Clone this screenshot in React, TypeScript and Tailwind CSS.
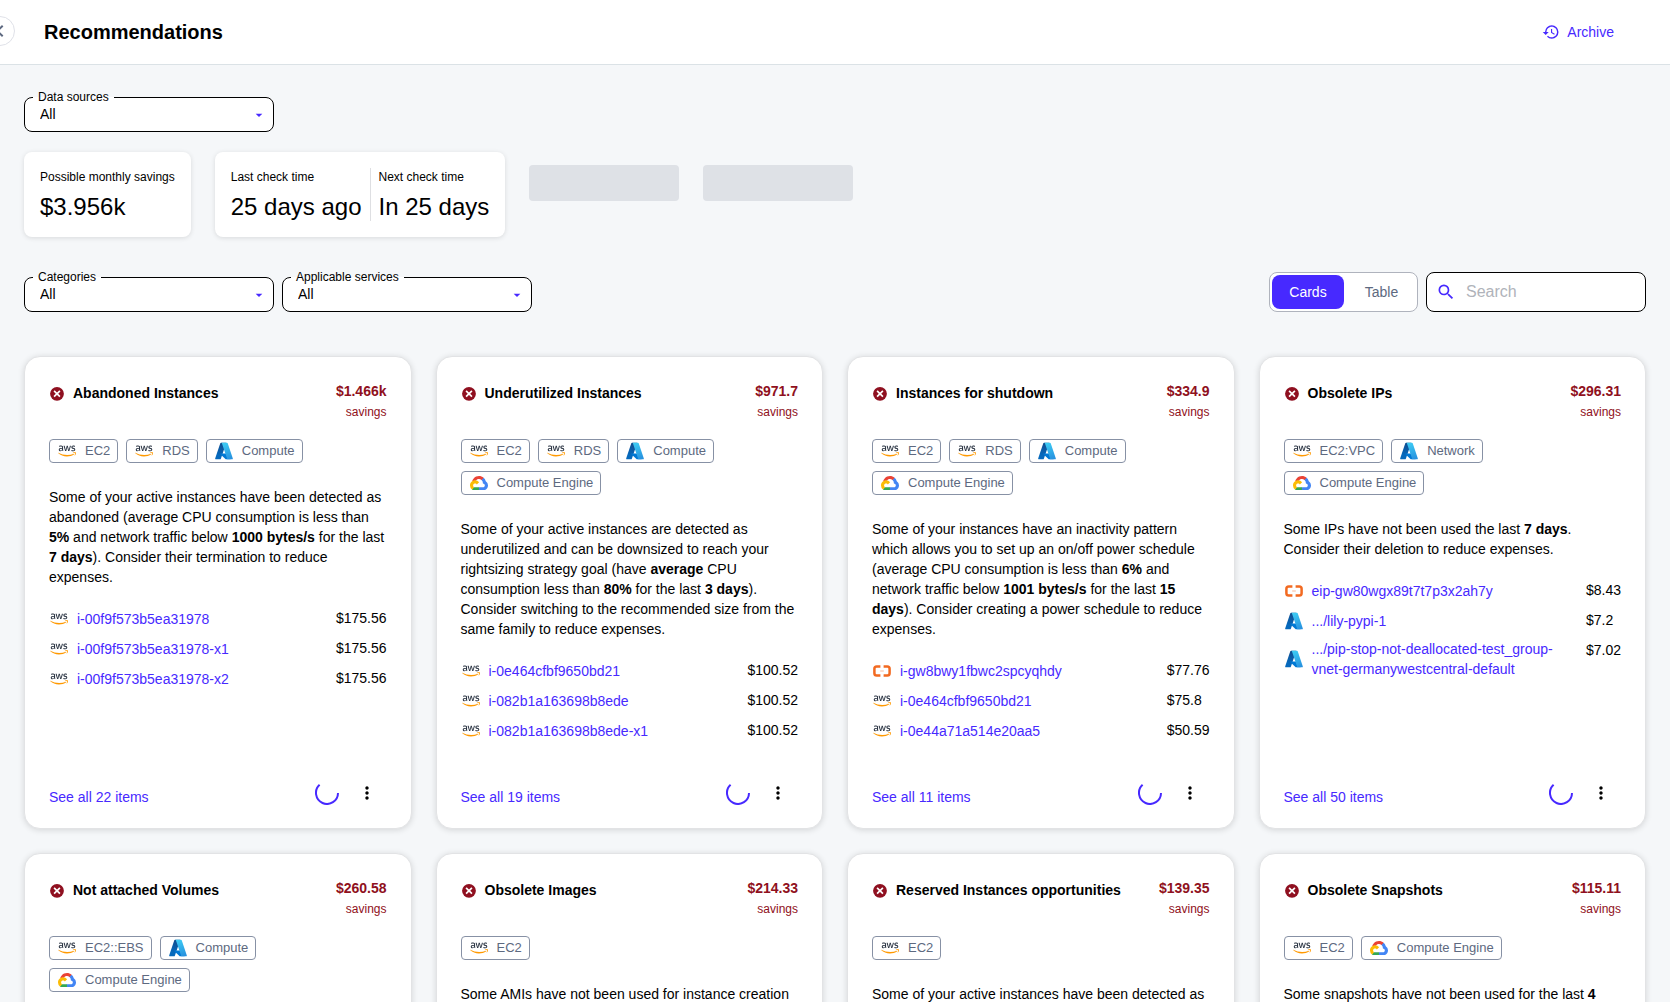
import type { ReactNode } from "react";
import { FaAws } from "react-icons/fa";
import { MdArrowDropDown, MdChevronLeft, MdHistory, MdMoreVert, MdSearch } from "react-icons/md";

type Cloud = "aws" | "azure" | "gcp" | "alibaba";

type Recommendation = {
  title: string;
  savings: string;
  services: [Cloud, string][];
  text: ReactNode;
  items: [Cloud, string, string][];
  count?: number;
};

const RECOMMENDATIONS: Recommendation[] = [
  {
    title: "Abandoned Instances",
    savings: "$1.466k",
    services: [["aws", "EC2"], ["aws", "RDS"], ["azure", "Compute"]],
    text: (
      <>
        Some of your active instances have been detected as abandoned (average CPU consumption is less than <b>5%</b> and
        network traffic below <b>1000 bytes/s</b> for the last <b>7&nbsp;days</b>). Consider their termination to reduce
        expenses.
      </>
    ),
    items: [
      ["aws", "i-00f9f573b5ea31978", "$175.56"],
      ["aws", "i-00f9f573b5ea31978-x1", "$175.56"],
      ["aws", "i-00f9f573b5ea31978-x2", "$175.56"],
    ],
    count: 22,
  },
  {
    title: "Underutilized Instances",
    savings: "$971.7",
    services: [["aws", "EC2"], ["aws", "RDS"], ["azure", "Compute"], ["gcp", "Compute Engine"]],
    text: (
      <>
        Some of your active instances are detected as underutilized and can be downsized to reach your rightsizing
        strategy goal (have <b>average</b> CPU consumption less than <b>80%</b> for the last <b>3 days</b>). Consider
        switching to the recommended size from the same family to reduce expenses.
      </>
    ),
    items: [
      ["aws", "i-0e464cfbf9650bd21", "$100.52"],
      ["aws", "i-082b1a163698b8ede", "$100.52"],
      ["aws", "i-082b1a163698b8ede-x1", "$100.52"],
    ],
    count: 19,
  },
  {
    title: "Instances for shutdown",
    savings: "$334.9",
    services: [["aws", "EC2"], ["aws", "RDS"], ["azure", "Compute"], ["gcp", "Compute Engine"]],
    text: (
      <>
        Some of your instances have an inactivity pattern which allows you to set up an on/off power schedule (average
        CPU consumption is less than <b>6%</b> and network traffic below <b>1001 bytes/s</b> for the last{" "}
        <b>15 days</b>). Consider creating a power schedule to reduce expenses.
      </>
    ),
    items: [
      ["alibaba", "i-gw8bwy1fbwc2spcyqhdy", "$77.76"],
      ["aws", "i-0e464cfbf9650bd21", "$75.8"],
      ["aws", "i-0e44a71a514e20aa5", "$50.59"],
    ],
    count: 11,
  },
  {
    title: "Obsolete IPs",
    savings: "$296.31",
    services: [["aws", "EC2:VPC"], ["azure", "Network"], ["gcp", "Compute Engine"]],
    text: (
      <>
        Some IPs have not been used the last <b>7 days</b>. Consider their deletion to reduce expenses.
      </>
    ),
    items: [
      ["alibaba", "eip-gw80wgx89t7t7p3x2ah7y", "$8.43"],
      ["azure", ".../lily-pypi-1", "$7.2"],
      ["azure", ".../pip-stop-not-deallocated-test_group-vnet-germanywestcentral-default", "$7.02"],
    ],
    count: 50,
  },
  {
    title: "Not attached Volumes",
    savings: "$260.58",
    services: [["aws", "EC2::EBS"], ["azure", "Compute"], ["gcp", "Compute Engine"]],
    text: null,
    items: [],
  },
  {
    title: "Obsolete Images",
    savings: "$214.33",
    services: [["aws", "EC2"]],
    text: "Some AMIs have not been used for instance creation",
    items: [],
  },
  {
    title: "Reserved Instances opportunities",
    savings: "$139.35",
    services: [["aws", "EC2"]],
    text: "Some of your active instances have been detected as",
    items: [],
  },
  {
    title: "Obsolete Snapshots",
    savings: "$115.11",
    services: [["aws", "EC2"], ["gcp", "Compute Engine"]],
    text: (
      <>
        Some snapshots have not been used for the last <b>4</b>
      </>
    ),
    items: [],
  },
];

function LogoGradients() {
  return (
    <svg className="absolute size-0" aria-hidden="true">
      <defs>
        <linearGradient id="aws-fill" x1="0" y1="0" x2="0" y2="1">
          <stop offset="0.62" stopColor="#252f3e" />
          <stop offset="0.62" stopColor="#ff9900" />
        </linearGradient>
        <linearGradient id="azure-left" x1="58.97" y1="11.2" x2="37.3" y2="75.3" gradientUnits="userSpaceOnUse">
          <stop offset="0" stopColor="#114a8b" />
          <stop offset="1" stopColor="#0669bc" />
        </linearGradient>
        <linearGradient id="azure-right" x1="46" y1="10" x2="74" y2="88" gradientUnits="userSpaceOnUse">
          <stop offset="0" stopColor="#3ccbf4" />
          <stop offset="1" stopColor="#2892df" />
        </linearGradient>
      </defs>
    </svg>
  );
}

function AzureLogo() {
  return (
    <svg viewBox="3 3 90 90" className="size-[18px]" aria-hidden="true">
      <path
        fill="url(#azure-left)"
        d="M33.338 6.544h26.038l-27.03 80.087a4.152 4.152 0 0 1-3.933 2.824H8.149a4.145 4.145 0 0 1-3.928-5.47L29.404 9.368a4.152 4.152 0 0 1 3.934-2.825z"
      />
      <path
        fill="#0078d4"
        d="M71.175 60.261h-41.29a1.911 1.911 0 0 0-1.305 3.309l26.532 24.764a4.171 4.171 0 0 0 2.846 1.121h23.38z"
      />
      <path
        fill="url(#azure-right)"
        d="M66.595 9.364a4.145 4.145 0 0 0-3.928-2.82H33.648a4.146 4.146 0 0 1 3.928 2.82l25.184 74.62a4.146 4.146 0 0 1-3.928 5.472h29.02a4.146 4.146 0 0 0 3.927-5.472z"
      />
    </svg>
  );
}

function GcpLogo() {
  return (
    <svg viewBox="0 0 256 206" className="w-[18px]" aria-hidden="true">
      <path
        fill="#ea4335"
        d="M170.252 56.819l22.253-22.253 1.483-9.37C153.437-11.677 88.976-7.496 52.42 33.92 42.267 45.423 34.734 59.764 30.717 74.573l7.97-1.123 44.505-7.34 3.436-3.513c19.797-21.742 53.27-24.667 76.128-6.168l7.496.39z"
      />
      <path
        fill="#4285f4"
        d="M224.205 73.918a100.249 100.249 0 0 0-30.217-48.722l-31.232 31.232a55.515 55.515 0 0 1 20.379 44.037v5.544c15.351 0 27.797 12.445 27.797 27.796 0 15.352-12.446 27.485-27.797 27.485h-55.671l-5.466 5.934v33.34l5.466 5.231h55.67c39.93.311 72.553-31.494 72.864-71.424a72.303 72.303 0 0 0-31.793-60.453"
      />
      <path
        fill="#34a853"
        d="M71.87 205.796h55.593V161.29H71.87a27.275 27.275 0 0 1-11.4-2.498l-7.887 2.42-22.409 22.253-1.952 7.574c12.567 9.489 27.9 14.825 43.647 14.757"
      />
      <path
        fill="#fbbc05"
        d="M71.87 61.425C31.94 61.664-.237 94.228.001 134.158a72.301 72.301 0 0 0 28.222 56.88l32.248-32.246c-13.99-6.322-20.208-22.786-13.887-36.776 6.32-13.99 22.786-20.208 36.775-13.888a27.796 27.796 0 0 1 13.887 13.888l32.248-32.248A72.224 72.224 0 0 0 71.87 61.425"
      />
    </svg>
  );
}

function AlibabaLogo() {
  return (
    <svg viewBox="0 0 18 12" className="w-[18px]" fill="none" stroke="#f26a21" aria-hidden="true">
      <path strokeWidth="2.5" d="M7.4 1.4H3.7a2.3 2.3 0 0 0-2.3 2.3v4.6a2.3 2.3 0 0 0 2.3 2.3h3.7" />
      <path strokeWidth="2.5" d="M10.6 1.4h3.7a2.3 2.3 0 0 1 2.3 2.3v4.6a2.3 2.3 0 0 1-2.3 2.3h-3.7" />
      <path strokeWidth="0.8" strokeOpacity="0.6" d="M7.2 6h3.6" />
    </svg>
  );
}

function ErrorIcon() {
  return (
    <svg viewBox="0 0 16 16" className="size-4" aria-hidden="true">
      <circle cx="8" cy="8.8" r="6.9" fill="#8f1020" />
      <path d="M5.1 5.9l5.8 5.8M10.9 5.9l-5.8 5.8" stroke="#fff" strokeWidth="1.7" />
    </svg>
  );
}

function CloudLogo({ cloud }: { cloud: Cloud }) {
  return (
    <span className="flex h-[18px] w-[18px] shrink-0 items-center justify-center">
      {cloud === "aws" && <FaAws fill="url(#aws-fill)" className="h-4 w-[18px]" aria-hidden="true" />}
      {cloud === "azure" && <AzureLogo />}
      {cloud === "gcp" && <GcpLogo />}
      {cloud === "alibaba" && <AlibabaLogo />}
    </span>
  );
}

function SelectField({ id, label }: { id: string; label: string }) {
  return (
    <fieldset className="relative w-[250px] rounded-lg border border-black bg-white">
      <legend className="ml-2 h-4 px-[5px] text-xs leading-4">
        <label htmlFor={id}>{label}</label>
      </legend>
      <select id={id} className="-mt-2 block h-[34px] w-full appearance-none bg-transparent px-[15px] text-sm outline-none">
        <option>All</option>
      </select>
      <MdArrowDropDown className="pointer-events-none absolute right-1.5 bottom-2 size-4 text-[#4729ff]" aria-hidden="true" />
    </fieldset>
  );
}

function Stat({ label, value }: { label: string; value: string }) {
  return (
    <div>
      <div className="text-xs leading-[18px]">{label}</div>
      <div className="mt-1.5 text-2xl leading-[29px]">{value}</div>
    </div>
  );
}

function Spinner() {
  return (
    <svg viewBox="0 0 24 24" className="size-6" role="progressbar" aria-label="Loading">
      <path d="M23 12A11 11 0 1 1 4.6 3.8" fill="none" stroke="#4729ff" strokeWidth="2" />
    </svg>
  );
}

function Card({ rec }: { rec: Recommendation }) {
  return (
    <article className="flex flex-col rounded-2xl border border-[#e2e3e5] bg-white px-6 pt-6 pb-4 shadow-[0_1px_6px_rgba(0,0,0,0.14)]">
      <header className="flex items-start justify-between">
        <h2 className="flex items-center gap-2 text-sm leading-6 font-bold">
          <ErrorIcon />
          {rec.title}
        </h2>
        <div className="text-right text-[#8f1020]">
          <div className="text-sm leading-5 font-bold">{rec.savings}</div>
          <div className="text-xs leading-[22px]">savings</div>
        </div>
      </header>
      <ul className="mt-4 flex flex-wrap gap-2">
        {rec.services.map(([cloud, name]) => (
          <li
            key={name}
            className="flex h-6 items-center gap-[9px] rounded border border-[#8791a5] pr-[7px] pl-2 text-[13px] text-[#5d6980]"
          >
            <CloudLogo cloud={cloud} />
            {name}
          </li>
        ))}
      </ul>
      <p className="mt-6 text-sm leading-5">{rec.text}</p>
      {rec.items.length > 0 && (
        <table className="mt-[17px] w-full text-sm leading-5">
          <tbody>
            {rec.items.map(([cloud, name, cost]) => (
              <tr key={name}>
                <td className="w-full py-[3px] pr-4 pl-px">
                  <div className="flex min-h-6 items-center gap-[9px]">
                    <CloudLogo cloud={cloud} />
                    <a href="#" className="text-[#4729ff]">
                      {name}
                    </a>
                  </div>
                </td>
                <td className="py-1 align-top whitespace-nowrap">{cost}</td>
              </tr>
            ))}
          </tbody>
        </table>
      )}
      {rec.count !== undefined && (
        <footer className="mt-auto flex items-end justify-between pt-7">
          <a href="#" className="pb-[5px] text-sm leading-5 text-[#4729ff]">
            See all {rec.count} items
          </a>
          <div className="flex items-center gap-2">
            <Spinner />
            <button type="button" aria-label="More actions" className="flex h-[38px] w-10 items-center justify-center">
              <MdMoreVert className="size-5" aria-hidden="true" />
            </button>
          </div>
        </footer>
      )}
    </article>
  );
}

export default function App() {
  return (
    <div className="flex h-screen flex-col overflow-hidden bg-[#f5f7f9] font-['Liberation_Sans',Arial,sans-serif] text-black">
      <LogoGradients />
      <header className="relative flex h-[65px] shrink-0 items-center justify-between border-b border-[#dbe2e6] bg-white pr-14 pl-11">
        <button
          type="button"
          aria-label="Collapse menu"
          className="absolute top-4 -left-[15px] flex size-[30px] items-center justify-center rounded-full border border-[#dfe1e8] bg-white"
        >
          <MdChevronLeft className="size-6 shrink-0 text-[#5d6980]" aria-hidden="true" />
        </button>
        <h1 className="text-xl font-bold">Recommendations</h1>
        <a href="#" className="flex items-center gap-[7px] text-sm text-[#4729ff]">
          <MdHistory className="size-[18px]" aria-hidden="true" />
          Archive
        </a>
      </header>
      <main className="flex flex-col px-6 pt-6">
        <SelectField id="data-sources" label="Data sources" />
        <section className="mt-5 flex items-start gap-6">
          <div className="rounded-lg bg-white p-4 shadow-[0_1px_5px_rgba(0,0,0,0.12)]">
            <Stat label="Possible monthly savings" value="$3.956k" />
          </div>
          <div className="flex rounded-lg bg-white p-4 shadow-[0_1px_5px_rgba(0,0,0,0.12)]">
            <div className="border-r border-[#dedfe2] pr-2">
              <Stat label="Last check time" value="25 days ago" />
            </div>
            <div className="pl-2">
              <Stat label="Next check time" value="In 25 days" />
            </div>
          </div>
          <div className="mt-[13px] h-9 w-[150px] rounded bg-[#dee1e6]" />
          <div className="mt-[13px] h-9 w-[150px] rounded bg-[#dee1e6]" />
        </section>
        <section className="mt-8 flex items-end gap-2">
          <SelectField id="categories" label="Categories" />
          <SelectField id="services" label="Applicable services" />
          <div className="ml-auto flex h-10 items-center gap-1 rounded-lg border border-[#afb3bd] bg-white p-0.5 text-sm">
            <button type="button" aria-pressed="true" className="h-[34px] w-[72px] rounded-lg bg-[#4729ff] text-white">
              Cards
            </button>
            <button type="button" aria-pressed="false" className="h-[34px] w-[67px] rounded-lg text-[#5d6980]">
              Table
            </button>
          </div>
          <label className="flex h-10 w-[220px] items-center gap-2.5 rounded-lg border border-black bg-white px-[9px]">
            <MdSearch className="size-5 shrink-0 text-[#4729ff]" aria-hidden="true" />
            <input
              type="text"
              aria-label="Search"
              placeholder="Search"
              className="w-full min-w-0 bg-transparent text-base outline-none placeholder:text-[#b0b3ba]"
            />
          </label>
        </section>
        <section className="mt-11 grid grid-cols-4 gap-6">
          {RECOMMENDATIONS.map((rec) => (
            <Card key={rec.title} rec={rec} />
          ))}
        </section>
      </main>
    </div>
  );
}
